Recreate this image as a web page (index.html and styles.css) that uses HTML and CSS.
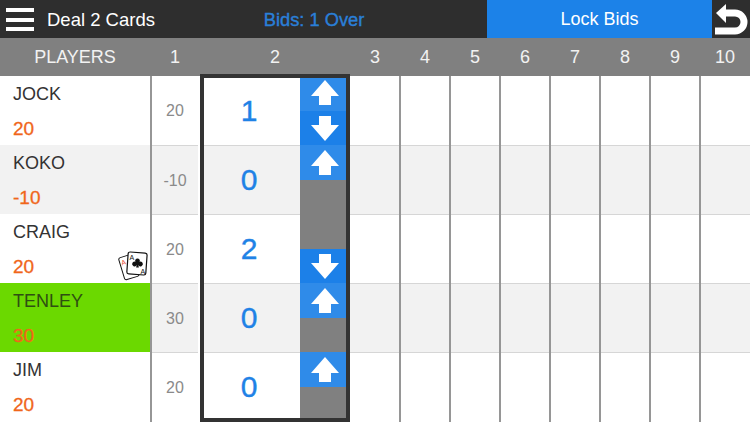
FILE: index.html
```html
<!DOCTYPE html>
<html lang="en">
<head>
    <meta charset="UTF-8">
    <title>Deal 2 Cards</title>
    <link rel="stylesheet" href="styles.css">
</head>
<body>

    <!-- Arrow shapes used by the bid buttons -->
    <svg class="defs" aria-hidden="true">
        <symbol id="arrow-up" viewBox="0 0 28 25"><path d="M14 0L28 16H20V25H8V16H0Z"/></symbol>
        <symbol id="arrow-down" viewBox="0 0 28 25"><path d="M14 25L28 9H20V0H8V9H0Z"/></symbol>
    </svg>

    <!-- Top bar -->
    <header class="topbar">
        <div class="menu-btn"><span></span><span></span><span></span></div>
        <div class="title">Deal 2 Cards</div>
        <div class="bid-status">Bids: 1 Over</div>
        <div class="lock-btn">Lock Bids</div>
        <div class="undo-btn">
            <svg width="34" height="34" viewBox="0 0 34 34">
                <path d="M11 1L1 10L11 20Z" fill="#fff"/>
                <path d="M9 10H20A9 9 0 0 1 20 28H0" fill="none" stroke="#fff" stroke-width="7"/>
            </svg>
        </div>
    </header>

    <!-- Round numbers -->
    <div class="heading">
        <div class="h-players">PLAYERS</div>
        <div class="h-round">1</div>
        <div class="h-bid">2</div>
        <div class="h-round">3</div>
        <div class="h-round">4</div>
        <div class="h-round">5</div>
        <div class="h-round">6</div>
        <div class="h-round">7</div>
        <div class="h-round">8</div>
        <div class="h-round">9</div>
        <div class="h-round">10</div>
    </div>

    <main class="board">

        <div class="players">
            <div class="player"><div class="name">JOCK</div><div class="total">20</div></div>
            <div class="player alt"><div class="name">KOKO</div><div class="total">-10</div></div>
            <div class="player">
                <div class="name">CRAIG</div><div class="total">20</div>
                <svg class="dealer" width="32" height="34" viewBox="0 0 32 34">
                    <g transform="rotate(-17 10 17)">
                        <rect x="4" y="7" width="15" height="23" rx="2" fill="#fff" stroke="#111" stroke-width="1"/>
                        <text x="5.500" y="15" class="card-a red">A</text>
                    </g>
                    <rect x="10.500" y="3.500" width="19" height="22" rx="2" fill="#fff" stroke="#111" stroke-width="1.200" transform="rotate(4 20 14)"/>
                    <text x="12.500" y="11" class="card-a">A</text>
                    <text x="23.500" y="25" class="card-a">A</text>
                    <path d="M20.500 9.500a2.300 2.300 0 0 1 2.100 3.300a2.400 2.400 0 1 1-1.300 3.300l.6 2.400h-2.800l.6-2.400a2.400 2.400 0 1 1-1.300-3.300A2.300 2.300 0 0 1 20.500 9.500Z" fill="#111"/>
                </svg>
            </div>
            <div class="player dealing"><div class="name">TENLEY</div><div class="total">30</div></div>
            <div class="player"><div class="name">JIM</div><div class="total">20</div></div>
        </div>

        <div class="col scores">
            <div class="cell">20</div>
            <div class="cell alt">-10</div>
            <div class="cell">20</div>
            <div class="cell alt">30</div>
            <div class="cell">20</div>
        </div>

        <!-- Round being bid -->
        <div class="bid-box">
            <div class="bid-row">
                <div class="bid-num">1</div>
                <div class="bid-ctl">
                    <div class="step up"><svg><use href="#arrow-up"/></svg></div>
                    <div class="step down"><svg><use href="#arrow-down"/></svg></div>
                </div>
            </div>
            <div class="bid-row">
                <div class="bid-num alt">0</div>
                <div class="bid-ctl">
                    <div class="step up"><svg><use href="#arrow-up"/></svg></div>
                    <div class="step off"></div>
                </div>
            </div>
            <div class="bid-row">
                <div class="bid-num">2</div>
                <div class="bid-ctl">
                    <div class="step off"></div>
                    <div class="step down"><svg><use href="#arrow-down"/></svg></div>
                </div>
            </div>
            <div class="bid-row">
                <div class="bid-num alt">0</div>
                <div class="bid-ctl">
                    <div class="step up"><svg><use href="#arrow-up"/></svg></div>
                    <div class="step off"></div>
                </div>
            </div>
            <div class="bid-row">
                <div class="bid-num">0</div>
                <div class="bid-ctl">
                    <div class="step up"><svg><use href="#arrow-up"/></svg></div>
                    <div class="step off"></div>
                </div>
            </div>
        </div>

        <div class="col"><div class="cell"></div><div class="cell alt"></div><div class="cell"></div><div class="cell alt"></div><div class="cell"></div></div>
        <div class="col"><div class="cell"></div><div class="cell alt"></div><div class="cell"></div><div class="cell alt"></div><div class="cell"></div></div>
        <div class="col"><div class="cell"></div><div class="cell alt"></div><div class="cell"></div><div class="cell alt"></div><div class="cell"></div></div>
        <div class="col"><div class="cell"></div><div class="cell alt"></div><div class="cell"></div><div class="cell alt"></div><div class="cell"></div></div>
        <div class="col"><div class="cell"></div><div class="cell alt"></div><div class="cell"></div><div class="cell alt"></div><div class="cell"></div></div>
        <div class="col"><div class="cell"></div><div class="cell alt"></div><div class="cell"></div><div class="cell alt"></div><div class="cell"></div></div>
        <div class="col"><div class="cell"></div><div class="cell alt"></div><div class="cell"></div><div class="cell alt"></div><div class="cell"></div></div>
        <div class="col"><div class="cell"></div><div class="cell alt"></div><div class="cell"></div><div class="cell alt"></div><div class="cell"></div></div>

    </main>

</body>
</html>
```

FILE: styles.css
```css
/* Reset */
* {
    box-sizing: border-box;
    margin: 0;
    padding: 0;
}

html, body {
    width: 750px;
    height: 422px;
    overflow: hidden;
    font-family: "Liberation Sans", Arial, sans-serif;
    font-size: 18px;
    background-color: #fff;
}

.defs {
    display: none;
}

/* Top bar */
.topbar {
    display: flex;
    align-items: stretch;
    height: 38px;
    background-color: #2e2e2e;
    color: #fff;
    line-height: 39px;
}

.menu-btn {
    display: flex;
    flex-direction: column;
    justify-content: space-between;
    width: 28px;
    height: 23px;
    margin: 8px 13px 0 6px;
}

.menu-btn span {
    display: block;
    height: 4px;
    background-color: #fff;
}

.title {
    width: 109px;
    font-size: 18.5px;
    white-space: nowrap;
}

.bid-status {
    width: 316px;
    margin-right: 15px;
    text-align: center;
    font-size: 18.3px;
    color: #2a7fd8;
    -webkit-text-stroke: 0.4px #2a7fd8;
}

.lock-btn {
    width: 225px;
    text-align: center;
    background-color: #1c82e8;
}

.undo-btn {
    width: 38px;
    padding: 3px 0 0 3px;
}

/* Round numbers */
.heading {
    display: flex;
    height: 38px;
    background-color: #808080;
    color: #f2f2f2;
    line-height: 39px;
    text-align: center;
}

.h-players,
.h-bid {
    width: 150px;
}

.h-round {
    width: 50px;
}

/* Board */
.board {
    display: flex;
    height: 346px;
}

.players {
    position: relative;
    width: 152px;
    border-right: 2px solid #969696;
}

.player {
    position: relative;
    height: 69px;
    padding: 8px 0 0 13px;
    background-color: #fff;
}

.player.alt {
    background-color: #f2f2f2;
}

.player.dealing {
    background-color: #6bd900;
}

.name {
    height: 21px;
    line-height: 21px;
    color: #333;
}

.dealing .name {
    color: #2f4f12;
}

.total {
    margin-top: 13px;
    height: 22px;
    line-height: 22px;
    font-size: 19px;
    color: #f0661a;
    -webkit-text-stroke: 0.3px #f0661a;
}

/* Dealer marker */
.dealer {
    position: absolute;
    left: 117px;
    top: 35px;
}

.card-a {
    font-size: 7px;
    fill: #111;
}

.card-a.red {
    fill: #e8492e;
}

/* Round columns */
.col {
    width: 50px;
    border-left: 1px solid #969696;
    border-right: 1px solid #969696;
}

.bid-box + .col {
    border-left: 0;
}

.col:last-child {
    border-right: 0;
}

.scores {
    width: 48px;
    border: 0;
    padding-right: 2px;
}

.cell {
    height: 69px;
    line-height: 69px;
    text-align: center;
    font-size: 16px;
    color: #8a8a8a;
}

.cell + .cell {
    border-top: 1px solid #d6d6d6;
}

.alt {
    background-color: #f2f2f2;
}

/* Round being bid */
.bid-box {
    width: 150px;
    height: 348px;
    margin-top: -2px;
    border: 4px solid #333;
}

.bid-row {
    display: flex;
    height: 69px;
}

.bid-row:first-child {
    height: 67px;
}

.bid-row:last-child {
    height: 66px;
}

.bid-num {
    flex: 1;
    padding-right: 6px;
    text-align: center;
    font-size: 30px;
    line-height: 65px;
    color: #1f82e6;
    -webkit-text-stroke: 0.4px #1f82e6;
}

.bid-row + .bid-row .bid-num {
    border-top: 1px solid #d6d6d6;
    line-height: 67px;
}

.bid-ctl {
    display: flex;
    flex-direction: column;
    width: 46px;
}

.step {
    display: flex;
    justify-content: center;
    align-items: center;
    padding-left: 4px;
}

.step svg {
    width: 28px;
    height: 25px;
    fill: #fff;
}

.step.up {
    flex: 0 0 35px;
    background-color: #2f8be9;
}

.step.down {
    flex: 0 0 34px;
    background-color: #1c80e8;
}

.step.off {
    flex: 1;
    background-color: #808080;
}

/* top button is cut short by the box border */
.bid-row:first-child .up {
    flex-basis: 33px;
}

.bid-row:first-child .up svg {
    margin-bottom: 4px;
}
```
